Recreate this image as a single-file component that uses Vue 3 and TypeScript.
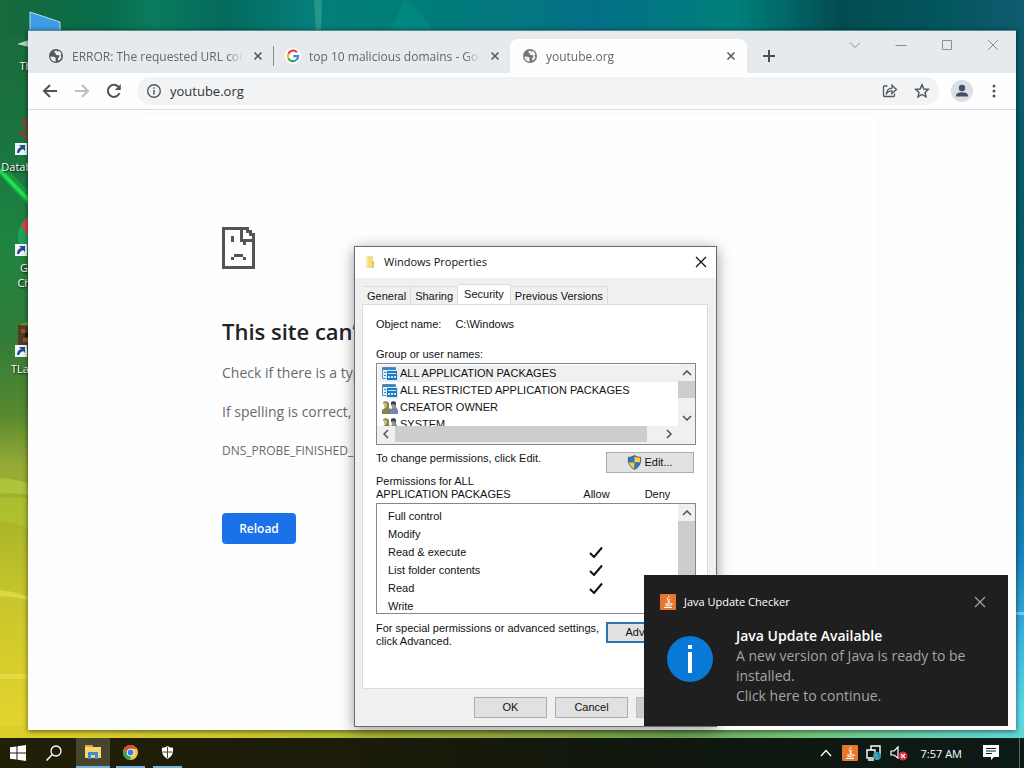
<script setup lang="ts">
import { ref } from 'vue'

interface BrowserTab {
  title: string
  icon: 'globe' | 'google'
  active: boolean
}

const tabs: BrowserTab[] = [
  { title: 'ERROR: The requested URL could not be retrieved', icon: 'globe', active: false },
  { title: 'top 10 malicious domains - Google Search', icon: 'google', active: false },
  { title: 'youtube.org', icon: 'globe', active: true },
]

const address = ref('youtube.org')

const shortcuts = [
  { kind: 'pc', label: 'This PC' },
  { kind: 'data', label: 'Database Tool' },
  { kind: 'chrome', label: 'Google Chrome' },
  { kind: 'game', label: 'TLauncher' },
]

const dialogTabs = ['General', 'Sharing', 'Security', 'Previous Versions']
const currentTab = ref('Security')

const principals = [
  { name: 'ALL APPLICATION PACKAGES', app: true },
  { name: 'ALL RESTRICTED APPLICATION PACKAGES', app: true },
  { name: 'CREATOR OWNER', app: false },
  { name: 'SYSTEM', app: false },
]

const permissions = [
  { name: 'Full control', allow: false },
  { name: 'Modify', allow: false },
  { name: 'Read & execute', allow: true },
  { name: 'List folder contents', allow: true },
  { name: 'Read', allow: true },
  { name: 'Write', allow: false },
]
</script>

<template>
  <div class="screen">
    <main class="desktop">
      <svg class="wallpaper" viewBox="0 0 1024 738" preserveAspectRatio="none" aria-hidden="true">
        <path d="M0 168Q14 184 32 202" stroke="#18e052" stroke-width="10" fill="none" opacity=".3" />
        <path d="M0 170Q14 186 32 203" stroke="#22dd50" stroke-width="4" fill="none" />
        <path d="M0 478Q16 479 30 484V495Q15 492 0 494Z" fill="#b9d23f" opacity=".6" />
        <path d="M0 498H30V528Q14 523 0 520Z" fill="#b5cc30" opacity=".5" />
        <path d="M0 590Q15 591 30 598V600Q14 597 0 596Z" fill="#e4e14a" opacity=".7" />
        <path d="M0 674H30V679H0Z" fill="#e8de4a" opacity=".7" />
        <path d="M314 0H322L321 31H316Z" fill="#2f9c8d" opacity=".8" />
        <path d="M405 0Q425 12 432 31H390Z" fill="#00958a" opacity=".4" />
        <path d="M1014 612H1024V615H1014Z" fill="#6fd0ee" />
      </svg>

      <ul class="shortcuts">
        <li v-for="s in shortcuts" :key="s.label" class="shortcut">
          <svg viewBox="0 0 48 48" width="48" height="48" aria-hidden="true">
            <template v-if="s.kind === 'pc'">
              <path d="M16 2L46 12V40L16 34Z" fill="#3d9ce6" stroke="#b5dcf8" />
              <path d="M3 34L15 30V37Z" fill="#b8d8c8" />
            </template>
            <template v-else-if="s.kind === 'data'">
              <path d="M9 14l7-9M7 24l12-10M10 29l10-6M8 8l9 16M16 4l6 7M5 20l8 7" stroke="#9c3b35" stroke-width="2" fill="none" />
            </template>
            <template v-else-if="s.kind === 'chrome'">
              <circle cx="26" cy="24" r="22" fill="#1ba25b" />
              <path d="M7 13A22 22 0 0 1 46 15H26L17 29Z" fill="#d94646" />
            </template>
            <template v-else>
              <path d="M4 12L30 7V36H4Z" fill="#553a22" />
              <path d="M5 12l16-7 9 4-12 4z" fill="#5f9638" />
              <path d="M7 16h4v4H7zM16 18h4v6h-4zM9 25h5v4H9zM20 14h4v4h-4z" fill="#8b5936" />
              <path d="M11 20h4v4h-4zM14 13h3v4h-3z" fill="#23170e" />
            </template>
            <g v-if="s.kind !== 'pc'">
              <path d="M1 32H13V44H1Z" fill="#f1f4f8" />
              <path d="M3 42Q3 37 7 36L5 34H11V40L9 38Q6 39 5 42Z" fill="#244d91" />
            </g>
          </svg>
          <span>{{ s.label }}</span>
        </li>
      </ul>

      <section class="browser" aria-label="Browser">
        <header class="tabstrip">
          <div v-for="t in tabs" :key="t.title" class="tab" :class="{ active: t.active }">
            <svg v-if="t.icon === 'globe'" class="fav" viewBox="0 0 16 16" aria-hidden="true">
              <circle cx="8" cy="8" r="7" :fill="t.active ? '#717479' : '#54585d'" />
              <path d="M2.300 8.500L6 8.800Q7.500 9 7.600 10.500V13.800Q3 13.300 2.300 8.500ZM8.500 2.300Q6 3 6.200 4.500L8 5.500Q7 6.500 8.500 7L11 7.200Q12 9 10 10.200V12.500Q12.500 12 13.500 9.500L12.500 7.500L13.500 6Q12 3 10.500 2.700L9 4Z" fill="#eef0f2" />
            </svg>
            <svg v-else class="fav" viewBox="0 0 16 16" aria-hidden="true">
              <circle cx="8" cy="8" r="8" fill="#fff" />
              <g fill="none" stroke-width="2.200">
                <path d="M12 4.300A5.200 5.200 0 0 0 3.400 5.700" stroke="#ea4335" />
                <path d="M3.400 5.700A5.200 5.200 0 0 0 3.400 10.400" stroke="#fbbc05" />
                <path d="M3.400 10.400A5.200 5.200 0 0 0 11.300 12" stroke="#34a853" />
                <path d="M11.300 12A5.200 5.200 0 0 0 13.200 8.200H8.200" stroke="#4285f4" />
              </g>
            </svg>
            <span class="tab-title">{{ t.title }}</span>
            <button class="plain tab-close" aria-label="Close tab">
              <svg viewBox="0 0 10 10" width="10" height="10"><path d="M1.500 1.500L8.500 8.500M8.500 1.500L1.500 8.500" stroke="#54585d" stroke-width="1.600" /></svg>
            </button>
          </div>
          <button class="plain new-tab" aria-label="New tab">
            <svg viewBox="0 0 12 12" width="12" height="12"><path d="M6 0V12M0 6H12" stroke="#4a4d52" stroke-width="2" /></svg>
          </button>
          <div class="win-controls">
            <button class="plain" aria-label="Search tabs"><svg viewBox="0 0 12 12" width="12" height="12"><path d="M1 3.500L6 8.500L11 3.500" /></svg></button>
            <button class="plain" aria-label="Minimize"><svg viewBox="0 0 12 12" width="12" height="12"><path d="M0.500 6.500H11.500" /></svg></button>
            <button class="plain" aria-label="Maximize"><svg viewBox="0 0 12 12" width="12" height="12"><path d="M1.500 1.500H10.500V10.500H1.500Z" /></svg></button>
            <button class="plain" aria-label="Close window"><svg viewBox="0 0 12 12" width="12" height="12"><path d="M1 1L11 11M11 1L1 11" /></svg></button>
          </div>
        </header>

        <div class="toolbar">
          <button class="plain nav" aria-label="Back"><svg viewBox="0 0 16 16" width="16" height="16"><path d="M15 8H2M8 2L2 8L8 14" stroke="#505459" stroke-width="2" fill="none" /></svg></button>
          <button class="plain nav" aria-label="Forward"><svg viewBox="0 0 16 16" width="16" height="16"><path d="M1 8H14M8 2L14 8L8 14" stroke="#bcbec1" stroke-width="2" fill="none" /></svg></button>
          <button class="plain nav" aria-label="Reload page"><svg viewBox="0 0 16 16" width="16" height="16"><path d="M13.500 10A6 6 0 1 1 12.300 3.800" stroke="#505459" stroke-width="2" fill="none" /><path d="M14.800 1V7H8.800Z" fill="#505459" /></svg></button>
          <div class="omnibox">
            <svg viewBox="0 0 16 16" width="16" height="16" aria-hidden="true"><circle cx="8" cy="8" r="6.300" stroke="#54585d" stroke-width="1.400" fill="none" /><path d="M8 7V11.500M8 4.300V5.800" stroke="#54585d" stroke-width="1.500" /></svg>
            <input v-model="address" type="text" aria-label="Address" />
            <button class="plain nav" aria-label="Share"><svg viewBox="0 0 16 16" width="16" height="16"><path d="M5.500 3H2.500Q1.500 3 1.500 4V12.500Q1.500 13.500 2.500 13.500H11.500Q12.500 13.500 12.500 12.500V10.500" stroke="#54585d" stroke-width="1.300" fill="none" /><path d="M4.500 10.500Q5 5.500 10 5.200V2.300L14.500 6.600L10 10.500V7.900Q6.500 7.800 4.500 10.500Z" stroke="#54585d" stroke-width="1.300" fill="none" /></svg></button>
            <button class="plain nav" aria-label="Bookmark"><svg viewBox="0 0 16 16" width="16" height="16"><path d="M8 1.800L9.900 6L14.300 6.400L11 9.400L12 13.900L8 11.500L4 13.900L5 9.400L1.700 6.400L6.100 6Z" stroke="#505459" stroke-width="1.400" fill="none" /></svg></button>
          </div>
          <button class="plain avatar" aria-label="Profile"><svg viewBox="0 0 22 22" width="22" height="22"><circle cx="11" cy="11" r="11" fill="#dcdfe6" /><circle cx="11" cy="8" r="3.200" fill="#44506a" /><path d="M5 16.500V15Q6 12.300 11 12.300T17 15V16.500Z" fill="#44506a" /></svg></button>
          <button class="plain nav" aria-label="Menu"><svg viewBox="0 0 16 16" width="16" height="16"><g fill="#505459"><circle cx="8" cy="3" r="1.500" /><circle cx="8" cy="8" r="1.500" /><circle cx="8" cy="13" r="1.500" /></g></svg></button>
        </div>

        <div class="page">
          <article class="error">
            <svg viewBox="0 0 33 42" width="33" height="42" aria-hidden="true" shape-rendering="crispEdges">
              <path d="M0 0H27V3H30V6H33V42H0ZM3 3V39H30V15H18V3ZM21 3V12H30V9H27V6H24V3Z" fill="#545454" fill-rule="evenodd" />
              <path d="M9 9H12V15H9ZM21 15H24V18H21ZM12 27H21V30H12ZM9 30H12V33H9ZM21 30H24V33H21Z" fill="#545454" />
            </svg>
            <h1>This site can’t be reached</h1>
            <p>Check if there is a typo in youtube.org.</p>
            <p>If spelling is correct, try running Windows Network Diagnostics.</p>
            <p class="code">DNS_PROBE_FINISHED_NXDOMAIN</p>
            <button class="reload">Reload</button>
          </article>
        </div>
      </section>

      <section class="dialog" role="dialog" aria-labelledby="dialog-title">
        <header class="dialog-bar">
          <svg viewBox="0 0 10 14" width="10" height="14" aria-hidden="true"><path d="M1 1H8V13H1Z" fill="#f3dc83" /><path d="M7 6H9V13H7Z" fill="#e6c65a" /><path d="M1 1H3V13H1Z" fill="#f8e9ae" /></svg>
          <h2 id="dialog-title">Windows Properties</h2>
          <button class="plain" aria-label="Close dialog"><svg viewBox="0 0 12 12" width="12" height="12"><path d="M1 1L11 11M11 1L1 11" stroke="#111" stroke-width="1.200" /></svg></button>
        </header>

        <div class="dialog-body">
          <div class="dialog-tabs" role="tablist">
            <button v-for="t in dialogTabs" :key="t" role="tab" :aria-selected="t === currentTab" :class="{ on: t === currentTab }" @click="currentTab = t">{{ t }}</button>
          </div>

          <div class="panel">
            <div class="object"><span>Object name:</span><span>C:\Windows</span></div>
            <div class="group-label">Group or user names:</div>
            <div class="listbox">
              <ul>
                <li v-for="(p, i) in principals" :key="p.name" :class="{ picked: i === 0 }">
                  <svg v-if="p.app" viewBox="0 0 16 16" width="16" height="16" aria-hidden="true">
                    <path d="M.5 1.500H13.500V12.500H.5Z" fill="#e3f1fa" stroke="#5f88a6" />
                    <path d="M1 2H13V4H1Z" fill="#3787c4" />
                    <path d="M2 6H4V7H2ZM2 9H4V10H2Z" fill="#3787c4" />
                    <path d="M4.500 4.500H15.500V14.500H4.500Z" fill="#1a7ac4" stroke="#d7ecf9" />
                    <path d="M6 7H14V8H6ZM6 10H8V12H6ZM9 10H11V12H9ZM12 10H14V12H12Z" fill="#cfe8fa" />
                  </svg>
                  <svg v-else viewBox="0 0 16 16" width="16" height="16" aria-hidden="true">
                    <path d="M1 2Q5 0 7 3L7 8L10 10V14H0V10L3 8Z" fill="#858348" />
                    <path d="M2 3Q5 2 5 5L4 8L2 7Z" fill="#c9bd83" />
                    <path d="M9 2Q13 0 14 3V7L16 10V14H8V10L10 8Z" fill="#7287b6" />
                    <path d="M9 2Q13 0 14 3V5L11 4L9 5Z" fill="#3f4146" />
                    <path d="M10 5H13V8H10Z" fill="#b89267" />
                  </svg>
                  {{ p.name }}
                </li>
              </ul>
              <div class="vscroll">
                <button class="plain" aria-label="Scroll up"><svg viewBox="0 0 10 6" width="10" height="6"><path d="M1 5L5 1L9 5" /></svg></button>
                <div class="track"><div class="thumb small"></div></div>
                <button class="plain" aria-label="Scroll down"><svg viewBox="0 0 10 6" width="10" height="6"><path d="M1 1L5 5L9 1" /></svg></button>
              </div>
              <div class="hscroll">
                <button class="plain" aria-label="Scroll left"><svg viewBox="0 0 6 10" width="6" height="10"><path d="M5 1L1 5L5 9" /></svg></button>
                <div class="track"><div class="thumb"></div></div>
                <button class="plain" aria-label="Scroll right"><svg viewBox="0 0 6 10" width="6" height="10"><path d="M1 1L5 5L1 9" /></svg></button>
              </div>
            </div>

            <div class="edit-row">
              <span>To change permissions, click Edit.</span>
              <button class="btn">
                <svg viewBox="0 0 16 16" width="15" height="15" aria-hidden="true">
                  <path d="M8 0Q11 2 15 2V7Q14 13 8 16Q2 13 1 7V2Q5 2 8 0Z" fill="#54606a" />
                  <path d="M8 1.500V8H2V3Q5 3 8 1.500Z" fill="#2b77c2" /><path d="M8 1.500Q11 3 14 3V8H8Z" fill="#f6cf4b" />
                  <path d="M2 8H8V14.800Q3 12 2 8Z" fill="#f6cf4b" /><path d="M14 8H8V14.800Q13 12 14 8Z" fill="#2b77c2" />
                </svg>Edit...
              </button>
            </div>

            <div class="perm-head">
              <span id="perm-title">Permissions for ALL<br />APPLICATION PACKAGES</span>
              <span class="col">Allow</span>
              <span class="col">Deny</span>
            </div>
            <div class="permbox">
              <table aria-labelledby="perm-title">
                <tbody>
                  <tr v-for="p in permissions" :key="p.name">
                    <th scope="row">{{ p.name }}</th>
                    <td class="allow"><svg v-if="p.allow" viewBox="0 0 14 12" width="14" height="12" role="img" aria-label="Allowed"><path d="M1 7L5 11L13 1.500" stroke="#111" stroke-width="2" fill="none" /></svg></td>
                    <td></td>
                  </tr>
                </tbody>
              </table>
              <div class="vscroll">
                <button class="plain" aria-label="Scroll permissions up"><svg viewBox="0 0 10 6" width="10" height="6"><path d="M1 5L5 1L9 5" /></svg></button>
                <div class="track"><div class="thumb tall"></div></div>
                <button class="plain" aria-label="Scroll permissions down"><svg viewBox="0 0 10 6" width="10" height="6"><path d="M1 1L5 5L9 1" /></svg></button>
              </div>
            </div>

            <div class="adv-row">
              <span>For special permissions or advanced settings, click Advanced.</span>
              <button class="btn focused">Advanced</button>
            </div>
          </div>

          <footer class="dialog-foot">
            <button class="btn">OK</button>
            <button class="btn">Cancel</button>
            <button class="btn" disabled>Apply</button>
          </footer>
        </div>
      </section>

      <aside class="toast" aria-label="Notification">
        <header>
          <svg viewBox="0 0 16 16" width="16" height="16" aria-hidden="true">
            <rect width="16" height="16" rx="1" fill="#e8762c" />
            <path d="M9.500 2Q6 4.500 8 6.500T7.500 9M10.500 5Q8 6 9 7.500T8.500 9M5 10H11M5.500 11.800H10.500M4 13.500H12M11 9.500Q13.500 9.500 11.500 11.500" stroke="#fff" fill="none" />
          </svg>
          <span>Java Update Checker</span>
          <button class="plain" aria-label="Dismiss"><svg viewBox="0 0 12 12" width="12" height="12"><path d="M1 1L11 11M11 1L1 11" stroke="#a5a5a5" stroke-width="1.200" /></svg></button>
        </header>
        <div class="toast-main">
          <svg viewBox="0 0 46 46" width="46" height="46" aria-hidden="true"><circle cx="23" cy="23" r="23" fill="#0a78d7" /><path d="M21 9H25V13H21ZM21 16H25V37H21Z" fill="#fff" /></svg>
          <div>
            <strong>Java Update Available</strong>
            <p>A new version of Java is ready to be installed.<br />Click here to continue.</p>
          </div>
        </div>
      </aside>
    </main>

    <footer class="taskbar">
      <button class="plain task" aria-label="Start"><svg viewBox="0 0 16 16" width="16" height="16"><path d="M0 2.300L6.500 1.400V7.500H0ZM7.500 1.200L16 0V7.500H7.500ZM0 8.500H6.500V14.600L0 13.700ZM7.500 8.500H16V16L7.500 14.800Z" fill="#fff" /></svg></button>
      <button class="plain task" aria-label="Search"><svg viewBox="0 0 16 16" width="16" height="16"><circle cx="10" cy="6" r="5" stroke="#fff" stroke-width="1.300" fill="none" /><path d="M6.300 9.500L0.500 15.500" stroke="#fff" stroke-width="1.500" /></svg></button>
      <button class="plain task open current" aria-label="File Explorer"><svg viewBox="0 0 18 16" width="18" height="16"><path d="M1 1H8L9 3H17V14H1Z" fill="#f7d571" /><path d="M1 1H8L9 3H1Z" fill="#dda83b" /><path d="M4 8H14V15H11V11H7V15H4Z" fill="#3d8fd1" /></svg></button>
      <button class="plain task open" aria-label="Chrome"><svg viewBox="0 0 16 16" width="15" height="15"><circle cx="8" cy="8" r="8" fill="#f5c63a" /><path d="M1.100 4A8 8 0 0 1 14.900 4H8L4.500 10Z" fill="#d94a3a" /><path d="M1.100 4L4.600 10L8 12V16A8 8 0 0 1 1.100 4Z" fill="#34a058" /><circle cx="8" cy="8" r="4" fill="#fff" /><circle cx="8" cy="8" r="3.100" fill="#3c7fe0" /></svg></button>
      <button class="plain task open" aria-label="Security"><svg viewBox="0 0 14 14" width="13" height="13"><path d="M7 0Q10 2 13 2V6Q12 11.500 7 14Q2 11.500 1 6V2Q4 2 7 0Z" fill="#fff" /><path d="M7 1V13M1.500 6.500H12.500" stroke="#33342a" /></svg></button>

      <div class="tray">
        <button class="plain" aria-label="Show hidden icons"><svg viewBox="0 0 12 8" width="12" height="8"><path d="M1 7L6 1.500L11 7" stroke="#fff" stroke-width="1.300" fill="none" /></svg></button>
        <svg viewBox="0 0 16 16" width="16" height="16" aria-hidden="true"><rect width="16" height="16" rx="1" fill="#e8762c" /><path d="M9.500 2Q6 4.500 8 6.500T7.500 9M10.500 5Q8 6 9 7.500T8.500 9M5 10H11M5.500 11.800H10.500M4 13.500H12M11 9.500Q13.500 9.500 11.500 11.500" stroke="#fff" fill="none" /></svg>
        <svg viewBox="0 0 16 16" width="16" height="16" aria-hidden="true"><path d="M5 5V1H14V10H12M1 5H9V13H1ZM2 15H8" stroke="#fff" stroke-width="1.400" fill="none" /><circle cx="11" cy="11" r="4" fill="#2b8fc8" /><path d="M8 9Q11 7 11 10T13 14Q9 16 10 12Z" fill="#51b86b" /></svg>
        <svg viewBox="0 0 18 16" width="18" height="16" aria-hidden="true"><path d="M1 6H4L8 2V13L4 10H1Z" stroke="#fff" stroke-width="1.200" fill="none" /><circle cx="13" cy="11" r="4.500" fill="#d9293c" /><path d="M11 9L15 13M15 9L11 13" stroke="#fff" stroke-width="1.200" /></svg>
        <time>7:57 AM</time>
        <button class="plain" aria-label="Action center"><svg viewBox="0 0 16 16" width="16" height="16"><path d="M0 0H16V12H11L8 15V12H0Z" fill="#fff" /><path d="M3 3.500H13M3 6H13M3 8.500H9" stroke="#16201c" stroke-width="1.100" /></svg></button>
        <span class="peek"></span>
      </div>
    </footer>
  </div>
</template>

<style>
body {
  margin: 0;
  overflow: hidden;
}
</style>

<style scoped>
* {
  box-sizing: border-box;
}

.screen {
  display: flex;
  flex-direction: column;
  height: 100vh;
  font-family: "Open Sans", "Noto Sans", sans-serif;
  font-size: 12px;
  color: #111;
}

.desktop {
  position: relative;
  flex: 1;
  min-height: 0;
  overflow: hidden;
  background:
    linear-gradient(90deg, #dccf2c, #cdc92e 22%, #b0ba32 36%, #94b043 52%, #6fa653 66%, #72c77e 80%, #5ed8d0 97%) bottom / 100% 12px no-repeat,
    linear-gradient(90deg, #176a3b, #086c4b 10%, #0a7b5d 15%, #046a5d 22%, #057e7a 30%, #007d78 40%, #04777f 50%, #037088 58%, #007f7b 72%, #024c51 82%, #02555b 91%, #0e5c70) top / 100% 34px no-repeat,
    linear-gradient(#176a3b, #1b7540 20%, #1d8440 32%, #327c38 46%, #56882f 56%, #94aa35 63%, #a8b42b 70%, #cac72c 82%, #e1d22d 96%) left / 40px 100% no-repeat,
    linear-gradient(#0e5c70, #085a68 30%, #0a6285 55%, #1583bd 75%, #3ab1df 86%, #58d9e4 96%);
}

.wallpaper {
  position: absolute;
  inset: 0;
  width: 100%;
  height: 100%;
}

.plain {
  display: flex;
  align-items: center;
  justify-content: center;
  padding: 0;
  border: 0;
  background: none;
}

.shortcuts {
  position: absolute;
  top: 10px;
  left: 0;
  width: 76px;
  margin: 0;
  padding: 0;
  list-style: none;
}

.shortcut {
  display: flex;
  flex-direction: column;
  align-items: center;
  height: 101px;
  color: #fff;
  font-size: 11px;
  line-height: 15px;
  text-align: center;
  text-shadow: 1px 1px 2px #000;
}

.shortcut:nth-child(2) span {
  white-space: nowrap;
}

.shortcut:nth-child(3) span {
  max-width: 48px;
}

.browser {
  position: absolute;
  inset: 30px 8px 8px 28px;
  display: flex;
  flex-direction: column;
  background: #fefefe;
  border-top: 1px solid #55888c;
  box-shadow: 0 1px 5px rgba(0, 0, 0, .6);
}

.tabstrip {
  display: flex;
  align-items: flex-start;
  height: 42px;
  padding-top: 8px;
  background: #e7eaed;
}

.tab {
  display: flex;
  align-items: center;
  gap: 8px;
  width: 237px;
  height: 34px;
  padding: 0 9px 0 12px;
  border-radius: 8px 8px 0 0;
  color: #62666b;
}

.tab:first-child {
  width: 246px;
  padding-left: 20px;
  position: relative;
}

.tab:first-child::after {
  content: "";
  position: absolute;
  right: 0;
  top: 7px;
  width: 1px;
  height: 20px;
  background: #898c90;
}

.tab:nth-child(2) {
  width: 236px;
  padding: 0 8px 0 11px;
}

.tab.active {
  background: #fefefe;
}

.fav {
  flex: none;
  width: 16px;
  height: 16px;
}

.tab-title {
  flex: 1;
  min-width: 0;
  overflow: hidden;
  white-space: nowrap;
  mask-image: linear-gradient(90deg, #000 91%, transparent);
}

.tab-close {
  flex: none;
  width: 14px;
  height: 14px;
}

.new-tab {
  margin-left: 16px;
  width: 12px;
  height: 34px;
}

.win-controls {
  display: flex;
  margin-left: auto;
}

.win-controls button {
  width: 46px;
  height: 12px;
}

.win-controls svg {
  fill: none;
  stroke: #8a8d92;
}

.toolbar {
  display: flex;
  align-items: center;
  gap: 16px;
  height: 37px;
  padding: 0 14px;
  border-bottom: 1px solid #d9dcdf;
}

.nav {
  flex: none;
  width: 16px;
  height: 16px;
}

.omnibox {
  display: flex;
  flex: 1;
  align-items: center;
  gap: 8px;
  height: 28px;
  margin-left: -1px;
  padding: 0 9px;
  border-radius: 14px;
  background: #f2f3f5;
}

.omnibox .nav + .nav {
  margin-left: 8px;
}

.omnibox input {
  flex: 1;
  min-width: 0;
  padding: 0;
  border: 0;
  outline: 0;
  background: none;
  color: #303237;
  font: 13px "Open Sans", sans-serif;
}

.avatar {
  width: 22px;
  height: 22px;
  margin: 0 -3px 0 -4px;
}

.page {
  flex: 1;
  min-height: 0;
  overflow: hidden;
  padding: 2px 113px;
}

.error {
  max-width: 738px;
  height: 502px;
  padding: 114px 80px 0;
  border: 1px solid #f9f9f9;
  color: #68696b;
  font-size: 14px;
}

.error svg {
  display: block;
}

.error h1 {
  margin: 46px 0 14px;
  color: #212326;
  font-size: 22px;
  font-weight: 600;
  line-height: 32px;
}

.error p {
  margin: 0 0 15px;
  line-height: 24px;
}

.error .code {
  font-size: 12px;
}

.reload {
  width: 74px;
  height: 31px;
  margin-top: 35px;
  border: 0;
  border-radius: 4px;
  background: #1b72e8;
  color: #fff;
  font: 600 12px "Open Sans", sans-serif;
}

.dialog {
  position: absolute;
  top: 246px;
  left: 354px;
  width: 363px;
  border: 1px solid #6b6b6b;
  background: #f0f0f0;
  box-shadow: 0 3px 14px rgba(0, 0, 0, .4);
  font: 11px/13px "Liberation Sans", Arial, sans-serif;
}

.dialog-bar {
  display: flex;
  align-items: center;
  gap: 9px;
  height: 31px;
  padding: 0 9px 2px 10px;
  background: #fff;
  font-family: "Open Sans", sans-serif;
}

.dialog-bar h2 {
  flex: 1;
  margin: 0;
  font-size: 11px;
  font-weight: 400;
}

.dialog-body {
  padding: 6px 7px 8px;
}

.dialog-tabs {
  display: flex;
  align-items: flex-end;
  height: 20px;
  padding-left: 1px;
}

.dialog-tabs button {
  height: 18px;
  padding: 1px 4px 0;
  border: 1px solid #dcdcdc;
  border-width: 1px 1px 0 0;
  background: #f0f0f0;
  color: #111;
  font: inherit;
}

.dialog-tabs .on {
  height: 20px;
  padding: 0 6px 1px;
  background: #fff;
}

.panel {
  height: 385px;
  margin-right: 1px;
  padding: 13px 11px 0 13px;
  border: 1px solid #dcdcdc;
  background: #fff;
}

.object {
  display: flex;
  gap: 14px;
}

.group-label {
  margin: 17px 0 2px;
}

.listbox {
  display: grid;
  grid-template: 62px 18px / 1fr 17px;
  height: 82px;
  border: 1px solid #828790;
}

.listbox ul {
  overflow: hidden;
  margin: 0;
  padding: 1px 0 0 1px;
  list-style: none;
}

.listbox li {
  display: flex;
  align-items: center;
  gap: 2px;
  height: 17px;
  padding-left: 4px;
  white-space: nowrap;
}

.picked {
  background: #f0f0f0;
}

.vscroll {
  display: flex;
  flex-direction: column;
  background: #f0f0f0;
}

.vscroll button {
  height: 17px;
}

.vscroll svg,
.hscroll svg {
  fill: none;
  stroke: #505050;
  stroke-width: 1.5;
}

.track {
  flex: 1;
}

.thumb {
  background: #cdcdcd;
}

.thumb.small {
  height: 17px;
}

.thumb.tall {
  height: 66px;
}

.hscroll {
  grid-column: 1 / 3;
  display: flex;
  padding-right: 17px;
  background: #f0f0f0;
}

.hscroll button {
  width: 18px;
  height: 16px;
}

.hscroll .thumb {
  width: 95%;
  height: 16px;
}

.edit-row {
  display: flex;
  justify-content: space-between;
  margin: 7px 2px 0 0;
}

.btn {
  display: flex;
  flex: none;
  align-items: center;
  justify-content: center;
  gap: 2px;
  width: 88px;
  height: 21px;
  padding: 0;
  border: 1px solid #adadad;
  background: #e1e1e1;
  color: #111;
  font: inherit;
}

.btn.focused {
  border: 2px solid #2a76b5;
}

.btn:disabled {
  border-color: #bfbfbf;
  background: #ccc;
  color: #838383;
}

.perm-head {
  display: flex;
  margin-top: 2px;
  align-items: flex-end;
}

.perm-head > :first-child {
  width: 190px;
}

.col {
  width: 61px;
  text-align: center;
}

.permbox {
  display: flex;
  height: 111px;
  margin-top: 2px;
  border: 1px solid #828790;
}

.permbox table {
  flex: 1;
  width: 100%;
  height: 108px;
  margin-top: 3px;
  border-collapse: collapse;
  table-layout: fixed;
}

.permbox th {
  width: 188px;
  height: 18px;
  padding: 0 0 0 11px;
  font-weight: 400;
  text-align: left;
}

.permbox td {
  padding: 0;
}

.permbox .allow {
  width: 61px;
}

.permbox td svg {
  display: block;
  margin: auto;
}

.permbox .vscroll {
  flex: none;
  width: 17px;
}

.adv-row {
  display: flex;
  justify-content: space-between;
  margin: 8px 2px 0 0;
}

.adv-row span {
  width: 228px;
}

.dialog-foot {
  display: flex;
  justify-content: flex-end;
  gap: 8px;
  padding-top: 8px;
}

.dialog-foot .btn {
  width: 73px;
}

.toast {
  position: absolute;
  right: 16px;
  bottom: 12px;
  width: 364px;
  padding: 17px 16px 20px;
  background: #1f1f1f;
  color: #fff;
}

.toast header {
  display: flex;
  align-items: center;
  gap: 8px;
  font-size: 11px;
  line-height: 20px;
}

.toast header button {
  width: 24px;
  height: 20px;
  margin-left: auto;
}

.toast-main {
  display: flex;
  gap: 23px;
  padding: 14px 0 0 7px;
  font-size: 14px;
  line-height: 20px;
}

.toast-main svg {
  flex: none;
  margin-top: 10px;
}

.toast strong {
  font-weight: 600;
}

.toast p {
  margin: 0;
  color: #a5a5a5;
}

.taskbar {
  display: flex;
  height: 30px;
  background: linear-gradient(90deg, #221f08, #1b1b08 35%, #10170d 60%, #0c1a17);
}

.task {
  width: 36px;
}

.task.open {
  margin: 0 4px;
  width: 29px;
  border-bottom: 2px solid #76b3dd;
}

.task.current {
  margin: 0 2px 0 4px;
  width: 34px;
  background: #47452f;
}

.tray {
  display: flex;
  align-items: center;
  gap: 8px;
  margin-left: auto;
  color: #fff;
  font-size: 11px;
}

.tray > :first-child {
  margin-right: 2px;
}

.tray time {
  margin: 0 13px 0 5px;
}

.peek {
  width: 5px;
  height: 30px;
  margin-left: 12px;
  border-left: 1px solid #5d6663;
}
</style>
